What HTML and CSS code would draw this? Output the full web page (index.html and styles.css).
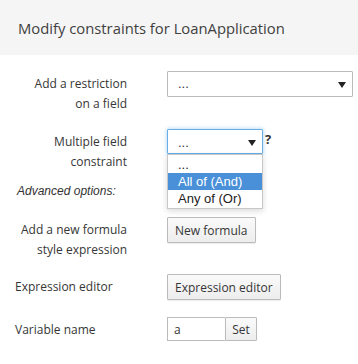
FILE: index.html
```html
<!DOCTYPE html>
<html lang="en">
<head>
  <meta charset="UTF-8">
  <title>Modify constraints</title>
  <link rel="stylesheet" href="styles.css">
</head>
<body>
  <div class="modal-header">
    <h4>Modify constraints for LoanApplication</h4>
  </div>
  <div class="modal-body">
    <div class="row row-restriction">
      <div class="label right">Add a restriction<br>on a field</div>
      <div class="select wide"><span>...</span><i class="caret"></i></div>
    </div>
    <div class="row row-multiple">
      <div class="label right">Multiple field<br>constraint</div>
      <div class="control">
        <div class="select narrow focused"><span>...</span><i class="caret"></i></div>
        <b class="help">?</b>
        <!-- открытый список -->
        <ul class="dropdown">
          <li>...</li>
          <li class="selected">All of (And)</li>
          <li>Any of (Or)</li>
        </ul>
      </div>
    </div>
    <div class="advanced">Advanced options:</div>
    <div class="row row-formula">
      <div class="label right">Add a new formula<br>style expression</div>
      <button class="btn">New formula</button>
    </div>
    <div class="row row-editor">
      <div class="label left">Expression editor</div>
      <button class="btn">Expression editor</button>
    </div>
    <div class="row row-variable">
      <div class="label left">Variable name</div>
      <div class="input-group">
        <input type="text" value="a">
        <button class="btn">Set</button>
      </div>
    </div>
  </div>
</body>
</html>
```

FILE: styles.css
```css
html, body {
  margin: 0;
  padding: 0;
  background: #fff;
}
body {
  font-family: "Open Sans", "Noto Sans", sans-serif;
  font-size: 12px;
  color: #363636;
}
.modal-header {
  background: #f5f5f5;
  height: 55px;
  box-sizing: border-box;
  padding: 17px 18px 0 18px;
}
.modal-header h4 {
  margin: 0;
  font-size: 14.8px;
  font-weight: 400;
  line-height: 22px;
  color: #3f3f3f;
}
.modal-body {
  padding: 16px 0 0 0;
}
.row {
  display: flex;
  align-items: flex-start;
}
.label {
  width: 127px;
  flex: none;
  line-height: 20px;
  margin-right: 40px;
  box-sizing: border-box;
}
.label.right {
  text-align: right;
  padding-top: 3px;
}
.label.left {
  text-align: left;
  padding-left: 15px;
  padding-top: 3px;
}
.row-restriction { margin-bottom: 15px; }
.row-multiple { margin-bottom: 9px; }
.row-formula { margin-bottom: 14px; }
.row-editor { margin-bottom: 17px; }

/* выпадающие списки */
.select {
  position: relative;
  box-sizing: border-box;
  height: 26px;
  border: 1px solid #bbb;
  border-radius: 1px;
  background: #fff;
  padding-left: 10px;
  font-family: "Liberation Sans", Arial, sans-serif;
  font-size: 13px;
  line-height: 24px;
  color: #333;
}
.select.wide { width: 186px; }
.select.narrow { width: 96px; height: 25px; line-height: 25px; }
.select.focused {
  border-color: #66afe9;
  box-shadow: 0 0 4px rgba(102, 175, 233, 0.6);
}
.caret {
  position: absolute;
  right: 6px;
  top: 10px;
  width: 0;
  height: 0;
  border-left: 4px solid transparent;
  border-right: 4px solid transparent;
  border-top: 6px solid #222;
}
.control {
  position: relative;
  display: flex;
  align-items: flex-start;
}
.help {
  font-family: "Open Sans", sans-serif;
  font-size: 13px;
  font-weight: 700;
  color: #333;
  line-height: 20px;
  margin-left: 2px;
}
.dropdown {
  position: absolute;
  left: 0;
  top: 25px;
  width: 96px;
  box-sizing: border-box;
  margin: 0;
  padding: 1px 0;
  list-style: none;
  background: #fff;
  border: 1px solid #c8c8c8;
  box-shadow: 0 2px 6px rgba(0, 0, 0, 0.15);
  font-family: "Liberation Sans", Arial, sans-serif;
  font-size: 13px;
  color: #222;
  z-index: 2;
}
.dropdown li {
  height: 17px;
  line-height: 17px;
  padding-left: 10px;
}
.dropdown li.selected {
  background: #4a90d9;
  color: #fff;
}
.advanced {
  font-family: "Liberation Sans", Arial, sans-serif;
  font-style: italic;
  font-size: 12px;
  line-height: 20px;
  color: #333;
  padding-left: 17px;
  margin-bottom: 16px;
}

/* кнопки и поле */
.btn {
  box-sizing: border-box;
  height: 26px;
  padding: 0 7px;
  border: 1px solid #bbb;
  border-radius: 1px;
  background: linear-gradient(#fafafa, #ededed);
  box-shadow: 0 1px 1px rgba(0, 0, 0, 0.08);
  font-family: "Open Sans", sans-serif;
  font-size: 12px;
  color: #363636;
  cursor: pointer;
}
.input-group {
  display: flex;
}
.input-group input {
  box-sizing: border-box;
  width: 58px;
  height: 24px;
  border: 1px solid #bbb;
  border-right: none;
  padding: 0 6px;
  font-family: "Open Sans", sans-serif;
  font-size: 12px;
  color: #363636;
  outline: none;
}
.input-group .btn {
  height: 24px;
  width: 32px;
  padding: 0;
}
```
